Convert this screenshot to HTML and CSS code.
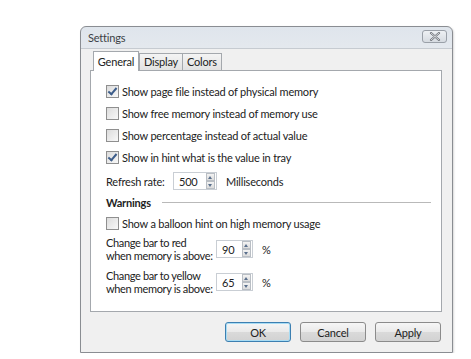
FILE: index.html
```html
<!DOCTYPE html>
<html lang="en">
<head>
    <meta charset="UTF-8">
    <title>Settings</title>
    <link rel="stylesheet" href="styles.css">
</head>
<body>
    <div class="window">
        <div class="titlebar">
            <span class="title">Settings</span>
            <span class="close-btn">
                <svg width="12" height="9" viewBox="0 0 12 9">
                    <path d="M2 1 L10 8 M10 1 L2 8" stroke="#6b6f76" stroke-width="2.2" stroke-linecap="round"/>
                    <path d="M2 1 L10 8 M10 1 L2 8" stroke="#f4f6f8" stroke-width="0.8" stroke-linecap="round"/>
                </svg>
            </span>
        </div>

        <div class="client">
            <div class="tabs">
                <div class="tab active">General</div>
                <div class="tab">Display</div>
                <div class="tab">Colors</div>
            </div>

            <div class="panel">
                <label class="check-row"><span class="checkbox checked"></span>Show page file instead of physical memory</label>
                <label class="check-row"><span class="checkbox"></span>Show free memory instead of memory use</label>
                <label class="check-row"><span class="checkbox"></span>Show percentage instead of actual value</label>
                <label class="check-row"><span class="checkbox checked"></span>Show in hint what is the value in tray</label>

                <div class="refresh-row">
                    <span class="refresh-label">Refresh rate:</span>
                    <div class="spin wide">
                        <span class="spin-value">500</span>
                        <span class="spin-arrows"><i class="up"></i><i class="down"></i></span>
                    </div>
                    <span class="unit">Milliseconds</span>
                </div>

                <div class="group-title">
                    <span>Warnings</span>
                    <span class="group-line"></span>
                </div>

                <label class="check-row"><span class="checkbox"></span>Show a balloon hint on high memory usage</label>

                <div class="threshold-row first">
                    <span class="threshold-label">Change bar to red<br>when memory is above:</span>
                    <div class="spin">
                        <span class="spin-value">90</span>
                        <span class="spin-arrows"><i class="up"></i><i class="down"></i></span>
                    </div>
                    <span class="unit">%</span>
                </div>

                <div class="threshold-row">
                    <span class="threshold-label">Change bar to yellow<br>when memory is above:</span>
                    <div class="spin">
                        <span class="spin-value">65</span>
                        <span class="spin-arrows"><i class="up"></i><i class="down"></i></span>
                    </div>
                    <span class="unit">%</span>
                </div>
            </div>

            <div class="buttons">
                <button class="btn default">OK</button>
                <button class="btn">Cancel</button>
                <button class="btn">Apply</button>
            </div>
        </div>
    </div>
</body>
</html>
```

FILE: styles.css
```css
/* Global */
* {
    margin: 0;
    padding: 0;
    box-sizing: border-box;
}

body {
    background: #ffffff;
    font-family: Lato, 'Noto Sans', sans-serif;
    font-size: 11px;
    letter-spacing: -0.2px;
    color: #222222;
}

/* Window frame */
.window {
    margin: 26px 0 0 80px;
    width: 373px;
    height: 327px;
    border: 1px solid #8a8d92;
    border-radius: 6px 6px 0 0;
    background: linear-gradient(to bottom, #dfe5ec, #e6eaef 30px, #eceef0);
    box-shadow: 1px 1px 2px rgba(0, 0, 0, 0.15);
    display: flex;
    flex-direction: column;
}

.titlebar {
    height: 24px;
    display: flex;
    align-items: center;
    justify-content: space-between;
    padding: 0 5px 0 7px;
}

.title {
    font-size: 11px;
    color: #3b3f45;
}

.close-btn {
    width: 25px;
    height: 13px;
    border: 1px solid #9aa0a8;
    border-radius: 3px;
    background: linear-gradient(to bottom, #eef1f4, #d6dbe1);
    display: flex;
    align-items: center;
    justify-content: center;
    margin-top: -2px;
}

/* Client area */
.client {
    flex: 1;
    border-top: 1px solid #c6cbd1;
    background: #f0f0f0;
    padding: 2px 10px 10px 9px;
    display: flex;
    flex-direction: column;
}

/* Tabs */
.tabs {
    display: flex;
    padding-left: 3px;
    height: 19px;
    align-items: flex-end;
}

.tab {
    height: 17px;
    padding: 0 4px;
    border: 1px solid #a4a8ad;
    border-bottom: none;
    margin-left: -1px;
    background: linear-gradient(to bottom, #f4f4f4, #e2e2e2);
    line-height: 15px;
}

.tab.active {
    width: 46px;
    padding: 0;
    text-align: center;
    margin-left: 0;
    margin-right: 1px;
    background: #ffffff;
    position: relative;
    z-index: 1;
    margin-bottom: -1px;
    height: 20px;
    line-height: 19px;
}

.panel {
    height: 242px;
    background: #ffffff;
    border: 1px solid #a4a8ad;
    padding: 9px 10px 0 15px;
}

/* Checkboxes */
.check-row {
    display: flex;
    align-items: center;
    height: 22px;
    white-space: nowrap;
}

.checkbox {
    width: 13px;
    height: 13px;
    border: 1px solid #8f8f8f;
    background: linear-gradient(135deg, #dcdcdc, #f8f8f8);
    margin-right: 3px;
    position: relative;
    flex-shrink: 0;
}

.checkbox.checked::after {
    content: "";
    position: absolute;
    left: 3px;
    top: 0px;
    width: 3px;
    height: 7px;
    border: solid #3d5d8a;
    border-width: 0 2px 2px 0;
    transform: rotate(40deg);
}

/* Refresh rate */
.refresh-row {
    display: flex;
    align-items: center;
    margin-top: 2px;
    height: 22px;
}

.refresh-label {
    width: 67px;
}

.spin {
    width: 37px;
    height: 18px;
    border: 1px solid #c9ced4;
    background: #ffffff;
    display: flex;
    align-items: center;
    justify-content: space-between;
    padding-left: 5px;
}

.spin.wide {
    width: 44px;
}

.spin-arrows {
    width: 9px;
    height: 16px;
    margin-right: 1px;
    display: flex;
    flex-direction: column;
}

.spin-arrows i {
    flex: 1;
    border: 1px solid #b9bec4;
    background: linear-gradient(to bottom, #f3f3f3, #dcdcdc);
    position: relative;
}

.spin-arrows i::after {
    content: "";
    position: absolute;
    left: 1px;
    border-left: 2.5px solid transparent;
    border-right: 2.5px solid transparent;
}

.spin-arrows .up::after {
    top: 2px;
    border-bottom: 3px solid #5a6f8c;
}

.spin-arrows .down::after {
    top: 2px;
    border-top: 3px solid #5a6f8c;
}

.unit {
    margin-left: 9px;
}

/* Warnings group */
.group-title {
    display: flex;
    align-items: center;
    height: 20px;
    font-weight: bold;
}

.group-line {
    flex: 1;
    height: 1px;
    background: #b9b9b9;
    margin-left: 11px;
}

/* Thresholds */
.threshold-row {
    display: flex;
    align-items: center;
    margin-top: 7px;
}

.threshold-row.first {
    margin-top: 2px;
}

.threshold-label {
    width: 110px;
    line-height: 13px;
    letter-spacing: -0.35px;
    white-space: nowrap;
}

/* Buttons */
.buttons {
    display: flex;
    justify-content: flex-end;
    gap: 9px;
    margin-top: 10px;
    padding-right: 1px;
}

.btn {
    width: 66px;
    height: 20px;
    font-family: Lato, 'Noto Sans', sans-serif;
    font-size: 11px;
    letter-spacing: -0.2px;
    color: #222222;
    border: 1px solid #8b8b8b;
    border-radius: 3px;
    background: linear-gradient(to bottom, #f6f6f6 0%, #e9e9e9 50%, #dadada 51%, #d2d2d2 100%);
}

.btn.default {
    border-color: #3c7fb1;
    box-shadow: inset 0 0 0 1px #a8dcf4;
}
```
